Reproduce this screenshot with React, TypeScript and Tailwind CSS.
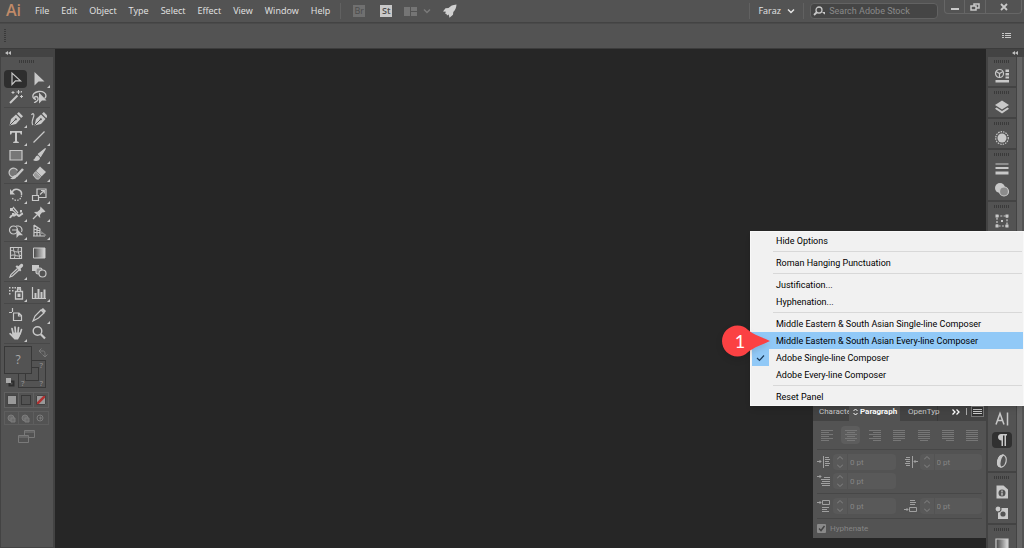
import type { ReactNode } from "react";
import clsx from "clsx";

type Tool = { name: string; icon: ReactNode; more?: boolean };

function Icon({ children }: { children: ReactNode }) {
  return (
    <svg
      viewBox="0 0 16 16"
      className="size-4 shrink-0"
      fill="none"
      stroke="currentColor"
      strokeWidth="1.2"
      aria-hidden="true"
    >
      {children}
    </svg>
  );
}

const penNib = (
  <>
    <path d="M1.5 14.5 3 8l5-4.500 4.500 4.500-4.500 5z" fill="currentColor" stroke="none" />
    <path d="m9 2.800 1.800-1.800 4.200 4.200-1.800 1.800z" fill="currentColor" stroke="none" />
    <path d="m2 14 5-5" stroke="#535353" strokeWidth="1" />
    <circle cx="7.8" cy="8.300" r="1.100" fill="#535353" stroke="none" />
  </>
);

const toolGroups: Tool[][] = [
  [
    { name: "Selection", icon: <path d="M4 2v11.500l3.500-3.700h5z" /> },
    {
      name: "Direct Selection",
      more: true,
      icon: <path d="M3.500 1v13.500l4-4h6z" fill="currentColor" stroke="none" />,
    },
    {
      name: "Magic Wand",
      icon: (
        <>
          <path d="m2 14 7.500-7.500" strokeWidth="2" />
          <path d="M10.500 1v4M8.500 3h4M13.500 6v3M12 7.500h3M5 2v3M3.500 3.500h3M13.500 2v1.500" strokeWidth="1" />
        </>
      ),
    },
    {
      name: "Lasso",
      icon: (
        <>
          <path d="M5 10.500C1.500 10 1 6.500 3 4.500s7-3 10-1 2 5 .5 6M5 10.500c-2 0-2-3 0-3s3 3 1 4.500-2.500 1-2.500 2" strokeWidth="1.400" />
          <path d="M8 3.500v11l3-3h4.500z" fill="currentColor" stroke="none" />
        </>
      ),
    },
  ],
  [
    { name: "Pen", more: true, icon: penNib },
    {
      name: "Curvature",
      icon: (
        <>
          <g transform="translate(2 0)">{penNib}</g>
          <path d="M.5 4C2 1.500 3.500 3 2.500 6S0 12 2 14" />
        </>
      ),
    },
    {
      name: "Type",
      more: true,
      icon: (
        <path
          d="M2 2h12v3.500h-1.200L12 3.700H9v8.600l1.800.6V14H5.200v-1.100l1.800-.6V3.700H4l-.8 1.800H2z"
          fill="currentColor"
          stroke="none"
        />
      ),
    },
    { name: "Line Segment", more: true, icon: <path d="M2.500 13.500 13.500 2.500" /> },
    { name: "Rectangle", more: true, icon: <path d="M2 3.500h12v9.500H2z" fill="#777" /> },
    {
      name: "Paintbrush",
      more: true,
      icon: (
        <>
          <path d="M14.500 1.500 7.500 7l2 2.500z" fill="currentColor" />
          <path d="M7 8.500c-3 0-2.500 3.500-5 4.500 2.500 2 7 .8 7-2z" fill="currentColor" stroke="none" />
        </>
      ),
    },
    {
      name: "Shaper",
      more: true,
      icon: (
        <>
          <path d="M9 10.500A4.500 4.500 0 1 1 9.500 5.500" fill="#777" />
          <path d="M15 4 8 11.500" strokeWidth="2.500" />
          <path d="M7.500 10C5 10 5 13 2 13.500c2.500 1.500 6.500.5 6.500-2z" fill="currentColor" stroke="none" />
        </>
      ),
    },
    {
      name: "Eraser",
      more: true,
      icon: (
        <>
          <path d="M9 1.500 15 7l-4.500 4.500L5 6z" fill="currentColor" stroke="none" />
          <path d="m4.500 6.800 5.300 5L7.500 14h-2L2 10z" fill="#9a9a9a" strokeWidth="1" />
        </>
      ),
    },
  ],
  [
    {
      name: "Rotate",
      more: true,
      icon: (
        <>
          <path d="M4 5.200A5 5 0 0 1 13.500 8" strokeWidth="1.500" />
          <path d="M13.500 8.500A5 5 0 0 1 4 10.500" strokeDasharray="1.500 1.200" />
          <path d="M2 2v5.500h5z" fill="currentColor" stroke="none" />
        </>
      ),
    },
    {
      name: "Scale",
      more: true,
      icon: <path d="M1.500 8.500h6v5h-6zM6 8V2h9v8.500H8M9 7.500l4-3.700M10 3.500h3.300v3" />,
    },
    {
      name: "Width",
      more: true,
      icon: (
        <>
          <path d="M2 13c2-5 3-1 5-3s3 1 4 1 1.500-2 4-2.500" strokeWidth="2" />
          <path d="M3 5.500c3-2 5 5 8 5.500M5 2l5 6" />
          <path d="M2 3h3v3H2zM12 5h2v2.500h-2zM4 8h2.500v2.500H4z" fill="currentColor" stroke="none" />
        </>
      ),
    },
    {
      name: "Puppet Warp",
      more: true,
      icon: (
        <>
          <path d="m9.500 1.500 5 5-1.500.7-2 .3-2 2.500.2 3L3 7l3.500-.2L9 4.500z" fill="currentColor" stroke="none" />
          <path d="m6 10-4 4" />
        </>
      ),
    },
    {
      name: "Shape Builder",
      more: true,
      icon: (
        <>
          <circle cx="5.500" cy="7" r="4" />
          <path d="M8 3h2.500a4 4 0 0 1 3 6M4 7h5" />
          <path d="M8.500 5.500V15l2.500-2.700h4z" fill="currentColor" stroke="none" />
        </>
      ),
    },
    {
      name: "Perspective Grid",
      more: true,
      icon: (
        <>
          <path d="M3 2v11M3 2l6 4v7M6 4v9M3 6l6 2M3 9.500h6M2 13h12" />
          <path d="m9 8 6 4.500M9 10.500h4" stroke="#8c8c8c" />
        </>
      ),
    },
  ],
  [
    {
      name: "Mesh",
      icon: (
        <>
          <path d="M2.500 2.500h11v11h-11z" />
          <path d="M2 6c4-2 4 3 12 0M2 11c5-3 6 2 12-1M6 2c-2 4 3 6 0 12M11 2c-3 5 2 7 0 12" strokeWidth="1" />
        </>
      ),
    },
    {
      name: "Gradient",
      icon: (
        <>
          <defs>
            <linearGradient id="toolGradient">
              <stop stopColor="#444" />
              <stop offset="1" stopColor="#ddd" />
            </linearGradient>
          </defs>
          <path d="M2.500 3h11.500v10H2.500z" fill="url(#toolGradient)" strokeWidth="1" />
        </>
      ),
    },
    {
      name: "Eyedropper",
      more: true,
      icon: (
        <>
          <path d="m9.500 5.500-6.500 6-1 2.500 2.500-1 6.500-6" />
          <path
            d="m7.500 3.500 1.500-1.200 1.300 1L12.500 1.200c2-1.200 3.500 1 2.200 2.500l-2.200 2 .8 1.500-1.300 1.300z"
            fill="currentColor"
            stroke="none"
          />
        </>
      ),
    },
    {
      name: "Blend",
      icon: (
        <>
          <path d="M1 2h7v6H1z" fill="currentColor" stroke="none" />
          <rect x="5" y="5" width="6" height="6" rx="2" fill="#8c8c8c" />
          <circle cx="11.500" cy="10.500" r="3.500" fill="#535353" />
        </>
      ),
    },
  ],
  [
    {
      name: "Symbol Sprayer",
      more: true,
      icon: (
        <>
          <path d="M7.500 6.500h7v7.500h-7zM9.500 6V4h3v2" strokeWidth="1.300" />
          <path
            d="M9.500 8.500h3v3.500h-3zM9 2h4v1.500H9zM1 2h1.500v1.500H1zM4 2h1.500v1.500H4zM6.500 2H8v1.500H6.500zM1 5h1.500v1.500H1zM4 5h1.500v1.500H4zM1 8h1.500v1.500H1z"
            fill="currentColor"
            stroke="none"
          />
        </>
      ),
    },
    {
      name: "Column Graph",
      more: true,
      icon: (
        <>
          <path d="M1.500 2v11.500H15" />
          <path
            d="M3.500 8H5.500v5.500H3.500zM6.500 4h2v9.500h-2zM9.500 7h2v6.500h-2zM12.500 4.500h2v9h-2z"
            fill="currentColor"
            stroke="none"
          />
        </>
      ),
    },
  ],
  [
    { name: "Artboard", icon: <path d="M4.500 1v4M1 5.500h3M5.500 6h5.500l2.500 2.500v5h-8zM10.500 6v3h3" /> },
    {
      name: "Slice",
      more: true,
      icon: (
        <>
          <path d="M10 3 4 9l-2 5 5.500-3 5.500-5z" />
          <path d="m10 2.500 2-1.500 3 3-1.500 2z" fill="currentColor" stroke="none" />
        </>
      ),
    },
    {
      name: "Hand",
      more: true,
      icon: (
        <>
          <path d="M5 8 4 3.500M7.500 7.500 7 2M10 7.500l.5-5M12 9l1.500-4.500" strokeWidth="1.700" strokeLinecap="round" />
          <path d="M4 7.500h8.700L12 11l-2 3.500H6.500L1 8.800l1.200-1L4.500 9.500z" fill="currentColor" stroke="none" />
        </>
      ),
    },
    {
      name: "Zoom",
      icon: (
        <>
          <circle cx="6.500" cy="6" r="4.300" strokeWidth="1.400" />
          <path d="m9.800 9.300 4.200 4.200" strokeWidth="2.200" />
        </>
      ),
    },
  ],
];

const transformIcon = (
  <>
    <path d="M3 3h10v10H3z" strokeDasharray="2 1.300" />
    <path
      d="M1.500 1.500h3v3h-3zM11.500 1.500h3v3h-3zM1.500 11.500h3v3h-3zM11.500 11.500h3v3h-3zM7 7h2v2H7z"
      fill="currentColor"
      stroke="none"
    />
  </>
);

const alignIcon = <path d="M2 2v12M4 4h9v3H4zM4 9h6v3H4z" />;

const dockGroups: Tool[][] = [
  [
    {
      name: "Libraries",
      icon: (
        <>
          <circle cx="5.500" cy="5.500" r="4" />
          <path d="m2 3.500 3.500 2 3.500-2M5.500 5.500v4" />
          <path
            d="M11.500 1.500h3.500V4h-3.500zM11.500 5h3.500v2.500h-3.500zM11.500 8.500h3.500v2h-3.500zM1.500 12h13.500v2.500H1.500z"
            fill="currentColor"
            stroke="none"
          />
        </>
      ),
    },
  ],
  [
    {
      name: "Layers",
      icon: (
        <g fill="currentColor" stroke="none">
          <path d="m8 1.500 7 4.500-7 4.500L1 6z" />
          <path d="m2.500 8.500 5.500 3.600 5.500-3.600L15 9.800l-7 4.700-7-4.700z" />
        </g>
      ),
    },
  ],
  [
    {
      name: "Appearance",
      icon: (
        <>
          <circle cx="8" cy="8" r="4.500" fill="currentColor" stroke="none" />
          <circle cx="8" cy="8" r="6.300" strokeDasharray="1.500 1" />
        </>
      ),
    },
  ],
  [
    {
      name: "Stroke",
      icon: (
        <path d="M1.500 2.500h13v1h-13zM1.500 6h13v2h-13zM1.500 10.500h13v3h-13z" fill="currentColor" stroke="none" />
      ),
    },
    {
      name: "Transparency",
      icon: (
        <>
          <circle cx="6" cy="6" r="5" fill="currentColor" stroke="none" />
          <circle cx="10" cy="9.500" r="4.500" fill="#8c8c8c" />
        </>
      ),
    },
  ],
  [
    { name: "Transform", icon: transformIcon },
    { name: "Align", icon: alignIcon },
  ],
  [
    { name: "Pathfinder", icon: alignIcon },
    { name: "Symbols", icon: transformIcon },
    { name: "Brushes", icon: alignIcon },
  ],
  [
    { name: "Swatches", icon: transformIcon },
    { name: "Color", icon: alignIcon },
    { name: "Color Guide", icon: transformIcon },
  ],
  [
    {
      name: "Character",
      icon: <path d="m2 13.500 4-11 4 11M3.500 9.500h5M13.500 1.500v13" strokeWidth="1.500" />,
    },
    {
      name: "Paragraph",
      icon: (
        <path
          d="M4 5a3 3 0 0 1 3.500-3H13v1.500h-1V14h-1.500V3.500H9V14H7.500V8.500C5.500 8.500 4 7 4 5z"
          fill="currentColor"
          stroke="none"
        />
      ),
    },
    {
      name: "OpenType",
      icon: (
        <>
          <path d="M9 2C4 2 1 13 6.500 14S15 3 9 2z" />
          <path d="M9 2C4 2 1 13 6.500 14 4.500 11 7 4 9 2z" fill="currentColor" />
        </>
      ),
    },
  ],
  [
    {
      name: "Document Info",
      icon: (
        <>
          <path d="M2.500 1.500h7L14 5.500v9H2.500z" fill="currentColor" stroke="none" />
          <circle cx="8" cy="9" r="3.500" fill="#535353" stroke="none" />
          <path d="M8 6.500V8M8 8.500v3" strokeWidth="1.300" />
        </>
      ),
    },
    {
      name: "Graphic Styles",
      icon: (
        <>
          <path d="M4 3h10v11H4z" fill="currentColor" stroke="none" />
          <circle cx="9" cy="9" r="2.600" fill="#535353" stroke="none" />
          <circle cx="4" cy="4" r="3" fill="currentColor" stroke="#535353" />
        </>
      ),
    },
  ],
  [
    {
      name: "Gradient",
      icon: (
        <>
          <defs>
            <linearGradient id="dockGradient">
              <stop stopColor="#444" />
              <stop offset="1" stopColor="#ddd" />
            </linearGradient>
          </defs>
          <path d="M2 3h12v10H2z" fill="url(#dockGradient)" />
        </>
      ),
    },
  ],
];

const menuBar = ["File", "Edit", "Object", "Type", "Select", "Effect", "View", "Window", "Help"];

const popupGroups = [
  ["Hide Options"],
  ["Roman Hanging Punctuation"],
  ["Justification...", "Hyphenation..."],
  [
    "Middle Eastern & South Asian Single-line Composer",
    "Middle Eastern & South Asian Every-line Composer",
    "Adobe Single-line Composer",
    "Adobe Every-line Composer",
  ],
  ["Reset Panel"],
];
const highlighted = "Middle Eastern & South Asian Every-line Composer";
const checked = "Adobe Single-line Composer";

function Chevron() {
  return (
    <svg
      viewBox="0 0 8 6"
      className="h-1.5 w-2 shrink-0"
      fill="none"
      stroke="currentColor"
      strokeWidth="1.500"
      aria-hidden="true"
    >
      <path d="m1 1.500 3 3 3-3" />
    </svg>
  );
}

function Collapse() {
  return (
    <button aria-label="Collapse panel" className="text-[#c0c0c0]">
      <svg viewBox="0 0 6 4" className="h-1 w-1.5" fill="currentColor" aria-hidden="true">
        <path d="M3 0v4L0 2zM6 0v4L3 2z" />
      </svg>
    </button>
  );
}

function Grip() {
  return (
    <div className="flex h-2 items-center justify-center">
      <svg width="16" height="3" aria-hidden="true">
        <path d="M0 1.500h16" stroke="#3a3a3a" strokeWidth="3" strokeDasharray="1 1" />
      </svg>
    </div>
  );
}

function TopBar() {
  return (
    <header className="flex h-[23px] items-start border-b border-[#434343] pl-1.5">
      <span className="w-[23px] text-base font-semibold leading-5 text-[#c08a68]">Ai</span>
      <nav className="flex h-[22px] items-center gap-3 pl-1.5">
        {menuBar.map((item) => (
          <button key={item} className="text-[#e4e4e4]">
            {item}
          </button>
        ))}
      </nav>
      <div className="flex h-[22px] items-center pl-2.5 text-[#7a7a7a]">
        <span className="h-4 w-px bg-[#616161]" />
        <button className="ml-3 size-3 bg-[#707070] text-center leading-3 text-[#4c4c4c]">Br</button>
        <button className="ml-[15px] size-3 bg-[#c8c8c8] text-center font-semibold leading-3 text-[#4c4c4c]">St</button>
        <button aria-label="Arrange documents" className="ml-3 flex items-center gap-1.5">
          <svg width="13" height="9" fill="#757575" aria-hidden="true">
            <path d="M0 0h6v9H0zM7 0h6v4H7zM7 5h6v4H7z" />
          </svg>
          <Chevron />
        </button>
        <button aria-label="GPU performance" className="ml-3 text-[#d0d0d0]">
          <svg viewBox="0 0 14 14" className="size-3.5" fill="currentColor" aria-hidden="true">
            <path d="M13.500.5C9.500.8 7.500 2 5.500 4L2.500 4.300 0 7.500l3 .3-1 1.700 1.500.5.5 1.500 1.700-1 .8 3.200 3.500-3 .3-2.700c2-2 3-4 3.200-7.500z" />
          </svg>
        </button>
      </div>
      <div className="ml-auto flex items-start">
        <div className="flex h-[22px] items-center">
          <span className="h-4 w-px bg-[#616161]" />
          <button className="flex items-center gap-1.5 px-2 text-[#e4e4e4]">
            Faraz
            <Chevron />
          </button>
          <span className="h-4 w-px bg-[#616161]" />
          <label className="ml-1.5 flex h-4 w-32 items-center gap-1 rounded-sm border border-[#626262] bg-[#454545] px-0.5 text-[#c8c8c8]">
            <svg width="14" height="10" fill="none" stroke="currentColor" strokeWidth="1.300" aria-hidden="true">
              <circle cx="6" cy="4" r="3" />
              <path d="M4 6 1 9" strokeWidth="1.800" />
              <path d="M9 6h5l-2.500 2.500z" fill="currentColor" stroke="none" />
            </svg>
            <input
              type="text"
              aria-label="Search Adobe Stock"
              placeholder="Search Adobe Stock"
              className="w-full min-w-0 bg-transparent font-['Roboto',sans-serif] outline-none placeholder:text-[#8a8a8a]"
            />
          </label>
        </div>
        <div className="ml-1.5 mr-0.5 flex h-3.5 rounded-b-sm border border-t-0 border-[#666] text-[#c8c8c8]">
          <button aria-label="Minimize" className="flex w-5 items-center justify-center border-r border-[#666]">
            <svg width="8" height="8" aria-hidden="true">
              <path d="M0 5h8v2H0z" fill="currentColor" />
            </svg>
          </button>
          <button aria-label="Restore" className="flex w-[21px] items-center justify-center border-r border-[#666]">
            <svg width="10" height="8" fill="none" stroke="currentColor" strokeWidth="1.500" aria-hidden="true">
              <path d="M1 3h5v4H1zM4 3V1h5v4H6" />
            </svg>
          </button>
          <button aria-label="Close" className="flex w-[35px] items-center justify-center">
            <svg width="8" height="8" stroke="currentColor" strokeWidth="1.800" aria-hidden="true">
              <path d="m1 1 6 6M7 1 1 7" />
            </svg>
          </button>
        </div>
      </div>
    </header>
  );
}

function ControlBar() {
  return (
    <div className="flex h-[26px] items-center justify-between border-b border-t border-b-[#3c3c3c] border-t-[#4a4a4a] pl-1 pr-3">
      <svg width="2" height="14" aria-hidden="true">
        <path d="M1 0v14" stroke="#3a3a3a" strokeWidth="2" strokeDasharray="1 1" />
      </svg>
      <button aria-label="Control panel menu" className="text-[#c8c8c8]">
        <svg width="10" height="8" stroke="currentColor" aria-hidden="true">
          <path d="M0 1.500h2M3 1.500h6M0 3.500h2M3 3.500h6M0 5.500h2M3 5.500h6" />
        </svg>
      </button>
    </div>
  );
}

function Swatches() {
  return (
    <div className="flex flex-col">
      <div className="relative h-[42px]">
        <button aria-label="Stroke" className="absolute left-3.5 top-3.5 size-7 border border-[#383838] bg-[#535353]">
          <span className="absolute left-1.5 top-1.5 size-3.5 border border-[#383838]" />
          <span className="absolute right-0.5 top-0 text-[8px] leading-2 text-[#999]">?</span>
          <span className="absolute bottom-0 left-0.5 text-[8px] leading-2 text-[#999]">?</span>
          <span className="absolute bottom-0 right-0.5 text-[8px] leading-2 text-[#999]">?</span>
        </button>
        <button
          aria-label="Fill"
          className="absolute left-0 top-0 size-7 border border-[#383838] bg-[#535353] text-xs text-[#aaa]"
        >
          ?
        </button>
        <svg
          className="absolute left-[34px] top-0.5"
          width="10"
          height="10"
          fill="none"
          stroke="#7a7a7a"
          aria-hidden="true"
        >
          <path d="M2 3h3c2 0 2 1 2 5M3.500.5 1 3l2.500 2.500M4.500 6.500 7 9l2.500-2.500" />
        </svg>
        <svg className="absolute left-0.5 top-8" width="9" height="9" aria-hidden="true">
          <path d="M3.500 3.500h4v4h-4z" fill="none" stroke="#2e2e2e" strokeWidth="2" />
          <path d="M0 0h5v5H0z" fill="#aaa" />
        </svg>
      </div>
      <div className="mt-1 grid h-4 w-[45px] grid-cols-3 divide-x divide-[#616161] border border-[#616161]">
        <button aria-label="Color" className="flex items-center justify-center bg-[#4a4a4a]">
          <span className="size-2.5 border border-[#444] bg-[#999]" />
        </button>
        <button aria-label="Gradient fill" className="flex items-center justify-center">
          <span className="size-2.5 border border-[#383838]" />
        </button>
        <button aria-label="None" className="flex items-center justify-center">
          <svg width="10" height="10" aria-hidden="true">
            <path d="M0 0h10v10H0z" fill="#999" />
            <path d="M0 10 10 0" stroke="#b03030" strokeWidth="2.500" />
            <path d="M.5.5h9v9h-9z" fill="none" stroke="#444" />
          </svg>
        </button>
      </div>
      <div className="mt-[3px] grid h-3.5 w-[45px] grid-cols-3 divide-x divide-[#5e5e5e] border border-[#5e5e5e]">
        {["Draw Normal", "Draw Behind", "Draw Inside"].map((mode, i) => (
          <button key={mode} aria-label={mode} className="flex items-center justify-center text-[#7c7c7c]">
            <svg width="9" height="9" fill="none" stroke="currentColor" aria-hidden="true">
              <circle cx="4" cy="4" r="3" fill={i === 2 ? "none" : "#6c6c6c"} />
              {i === 2 ? <path d="M4 3h1v2H4z" /> : <path d="M4 4h4v4H4z" fill="#6c6c6c" />}
            </svg>
          </button>
        ))}
      </div>
      <button aria-label="Screen mode" className="ml-3.5 mt-[5px] w-[17px] text-[#7a7a7a]">
        <svg width="17" height="13" fill="#535353" stroke="currentColor" aria-hidden="true">
          <path d="M6.500.5h10v7h-10z" />
          <path d="M6.500 2h10" />
          <path d="M.5 5.500h10v7H.5z" />
          <path d="M.5 7h10" />
        </svg>
      </button>
    </div>
  );
}

function ToolPanel() {
  return (
    <aside className="flex w-[55px] shrink-0 flex-col border-b border-l border-r-2 border-[#434343]">
      <div className="flex h-2 items-center bg-[#434343] pl-1">
        <Collapse />
      </div>
      <Grip />
      <div className="flex flex-col px-[3px] pt-[5px]">
        {toolGroups.map((group, i) => (
          <div key={i}>
            <div className="grid w-[46px] grid-cols-2">
              {group.map((tool) => (
                <button
                  key={tool.name}
                  aria-label={tool.name}
                  className={clsx(
                    "relative flex h-[18px] items-center justify-center rounded-sm text-[#c8c8c8]",
                    tool.name === "Selection" && "bg-[#2e2e2e]",
                  )}
                >
                  <Icon>{tool.icon}</Icon>
                  {tool.more && (
                    <svg
                      className="absolute bottom-0 right-0"
                      width="3"
                      height="3"
                      fill="currentColor"
                      aria-hidden="true"
                    >
                      <path d="M3 0v3H0z" />
                    </svg>
                  )}
                </button>
              ))}
            </div>
            <hr className="my-px h-0.5 border-0 border-t border-[#484848]" />
          </div>
        ))}
        <Swatches />
      </div>
    </aside>
  );
}

const alignments = [
  "Align left",
  "Align center",
  "Align right",
  "Justify last left",
  "Justify last center",
  "Justify last right",
  "Justify all",
];
const shortLineStart = [0, 2, 4, 0, 2, 4, 0];

function AlignButton({ name, index }: { name: string; index: number }) {
  const short = index === 6 ? 12 : 8;
  return (
    <button
      aria-label={name}
      className={clsx(
        "flex h-[18px] w-[19px] items-center justify-center rounded-sm text-[#777]",
        index === 1 && "bg-[#5d5d5d]",
      )}
    >
      <svg width="12" height="11" fill="currentColor" aria-hidden="true">
        {[0, 2, 4, 6, 8, 10].map((y, i) => {
          const full = index > 2 ? i < 5 : i % 2 === 0;
          return <rect key={y} x={full ? 0 : shortLineStart[index]} y={y} width={full ? 12 : short} height="1" />;
        })}
      </svg>
    </button>
  );
}

function Field({ label, children }: { label: string; children: ReactNode }) {
  return (
    <label className="flex h-4 items-center gap-0.5 text-[#a0a0a0]">
      <svg width="14" height="14" fill="none" stroke="currentColor" aria-hidden="true">
        {children}
      </svg>
      <span className="flex h-4 flex-1 items-center rounded-sm bg-[#595959]">
        <svg className="mx-1 shrink-0" width="6" height="12" fill="none" stroke="#858585" aria-hidden="true">
          <path d="m0 3.500 3-3 3 3M0 8.500l3 3 3-3" />
        </svg>
        <input
          type="text"
          aria-label={label}
          defaultValue="0 pt"
          className="h-4 w-full min-w-0 border-l border-[#535353] bg-transparent pl-0.5 text-[8px] text-[#858585] outline-none"
        />
      </span>
    </label>
  );
}

function ParagraphPanel() {
  return (
    <section aria-label="Paragraph" className="w-[173px] bg-[#535353] font-['Roboto',sans-serif] text-[8px]">
      <div className="flex h-[19px] items-stretch bg-[#434343] text-[#c8c8c8]">
        <button className="w-9 whitespace-nowrap pl-1.5 text-left">Characte</button>
        <button className="flex w-[51px] items-center gap-0.5 bg-[#535353] pl-1 font-bold text-white">
          <svg className="shrink-0" width="5" height="8" fill="none" stroke="currentColor" aria-hidden="true">
            <path d="m.5 3 2-2 2 2M.5 5l2 2 2-2" />
          </svg>
          Paragraph
        </button>
        <button className="w-[38px] whitespace-nowrap border-r border-[#3a3a3a] pl-2 text-left">OpenTyp</button>
        <button aria-label="More tabs" className="ml-auto text-white">
          <svg width="8" height="6" fill="none" stroke="currentColor" strokeWidth="1.300" aria-hidden="true">
            <path d="m.5.5 2.500 2.500L.5 5.500M4.500.5 7 3 4.500 5.500" />
          </svg>
        </button>
        <span className="my-1.5 ml-1.5 w-px bg-[#aaa]" />
        <button
          aria-label="Panel menu"
          className="mb-1 ml-1 mr-0.5 mt-1 flex w-[13px] items-center justify-center border border-[#777] bg-[#333]"
        >
          <svg width="9" height="5" fill="currentColor" aria-hidden="true">
            <path d="M0 0h9v1H0zM0 2h9v1H0zM0 4h9v1H0z" />
          </svg>
        </button>
      </div>
      <div className="px-1">
        <div className="flex h-[29px] items-center justify-between border-b border-[#474747]">
          {alignments.map((name, i) => (
            <AlignButton key={name} name={name} index={i} />
          ))}
        </div>
        <div className="grid grid-cols-2 gap-x-2 gap-y-[3px] border-b border-[#474747] py-1">
          <Field label="Left indent">
            <path d="M0 6.500h4M2.500 5 4 6.500 2.500 8M6.500 1v12M8 2.500h4M8 4.500h5M8 6.500h4M8 8.500h5M8 10.500h4" />
          </Field>
          <Field label="Right indent">
            <path d="M14 6.500h-4M11.500 5 10 6.500 11.500 8M8.500 1v12M2 2.500h4M1 4.500h5M2 6.500h4M1 8.500h5M2 10.500h4" />
          </Field>
          <Field label="First line indent">
            <path d="M0 2.500h4M2.500 1 4 2.500 2.500 4M7 3.500h6M4 5.500h9M5 7.500h8M4 9.500h9M5 11.500h8" />
          </Field>
        </div>
        <div className="grid grid-cols-2 gap-x-2 border-b border-[#474747] py-1">
          <Field label="Space before">
            <path d="M0 3.500h4M2.500 2 4 3.500 2.500 5M5.500 1.500h7v4h-7zM5 8.500h7M5 10.500h5M5 12.500h7" />
          </Field>
          <Field label="Space after">
            <path d="M0 10.500h4M2.500 9 4 10.500 2.500 12M5.500 8.500h7v4h-7zM6 1.500h5M6 3.500h6M6 5.500h5" />
          </Field>
        </div>
        <label className="flex h-[19px] items-center gap-1 text-[#858585]">
          <span className="relative flex size-[9px]">
            <input type="checkbox" defaultChecked className="size-[9px] appearance-none rounded-[1px] bg-[#8a8a8a]" />
            <svg
              className="pointer-events-none absolute inset-0"
              viewBox="0 0 9 9"
              fill="none"
              stroke="#444"
              strokeWidth="1.500"
              aria-hidden="true"
            >
              <path d="m2 4.500 2 2L7.500 2" />
            </svg>
          </span>
          Hyphenate
        </label>
      </div>
    </section>
  );
}

function Dock() {
  return (
    <aside className="flex w-[38px] shrink-0 flex-col border-l-2 border-[#434343]">
      <div className="flex h-2 shrink-0 items-center justify-end bg-[#434343] pr-1.5">
        <Collapse />
      </div>
      <div className="flex min-h-0 flex-1">
        <div className="w-[29px] border-r border-[#434343]">
          {dockGroups.map((group, i) => (
            <div key={i} className="border-b-2 border-[#434343]">
              <Grip />
              {group.map((panel) => (
                <button
                  key={panel.name}
                  aria-label={panel.name}
                  className="flex h-[21px] w-full items-center justify-center text-[#c8c8c8]"
                >
                  <span
                    className={clsx(
                      "flex h-4 w-5 items-center justify-center",
                      panel.name === "Paragraph" && "rounded-sm bg-[#303030]",
                    )}
                  >
                    <Icon>{panel.icon}</Icon>
                  </span>
                </button>
              ))}
            </div>
          ))}
        </div>
        <div className="mr-0.5 flex-1 bg-[#656565]" />
      </div>
    </aside>
  );
}

function PopupMenu() {
  return (
    <div
      className="absolute right-0 top-[231px] w-[274px] border border-[#f8f8f8] bg-[#f1f1f1] font-['Roboto',sans-serif] text-black shadow-md"
      role="menu"
    >
      {popupGroups.map((group, i) => (
        <div key={i}>
          {i > 0 && <hr className="my-0.5 ml-[22px] mr-px border-[#d8d8d8]" />}
          {group.map((item) => (
            <button
              key={item}
              role="menuitem"
              className={clsx("flex h-[17px] w-full items-center pr-px text-left", item === highlighted && "bg-[#91c9f7]")}
            >
              <span
                className={clsx(
                  "ml-px mr-[7px] flex h-full w-[17px] items-center justify-center",
                  item === checked && "bg-[#91c9f7]",
                )}
              >
                {item === checked && (
                  <svg width="9" height="8" fill="none" stroke="#1a3a5a" strokeWidth="1.200" aria-hidden="true">
                    <path d="m1 4 2.500 2.500L8 1.500" />
                  </svg>
                )}
              </span>
              {item}
            </button>
          ))}
        </div>
      ))}
      <div className="absolute left-[-30px] top-[93px] flex h-8 w-[50px] items-center">
        <svg className="absolute inset-0 drop-shadow-md" viewBox="0 0 50 32" fill="#fb4143" aria-hidden="true">
          <path d="M16.500.5C8 .5 1 7.500 1 16s7 15.500 15.500 15.500c4 0 7.500-1.500 10-4C33 22 42 19.500 49 16 42 12.500 33 10 26.500 4.500c-2.500-2.500-6-4-10-4z" />
        </svg>
        <span className="relative w-[38px] text-center font-['Lato',sans-serif] text-lg leading-5 text-white">1</span>
      </div>
    </div>
  );
}

export default function App() {
  return (
    <div className="relative flex h-screen flex-col overflow-hidden bg-[#535353] font-['Open_Sans',sans-serif] text-[9px] leading-3">
      <TopBar />
      <ControlBar />
      <div className="flex min-h-0 flex-1">
        <ToolPanel />
        <main className="flex min-w-0 flex-1 items-end justify-end bg-[#262626] pb-2.5">
          <ParagraphPanel />
        </main>
        <Dock />
      </div>
      <PopupMenu />
    </div>
  );
}
